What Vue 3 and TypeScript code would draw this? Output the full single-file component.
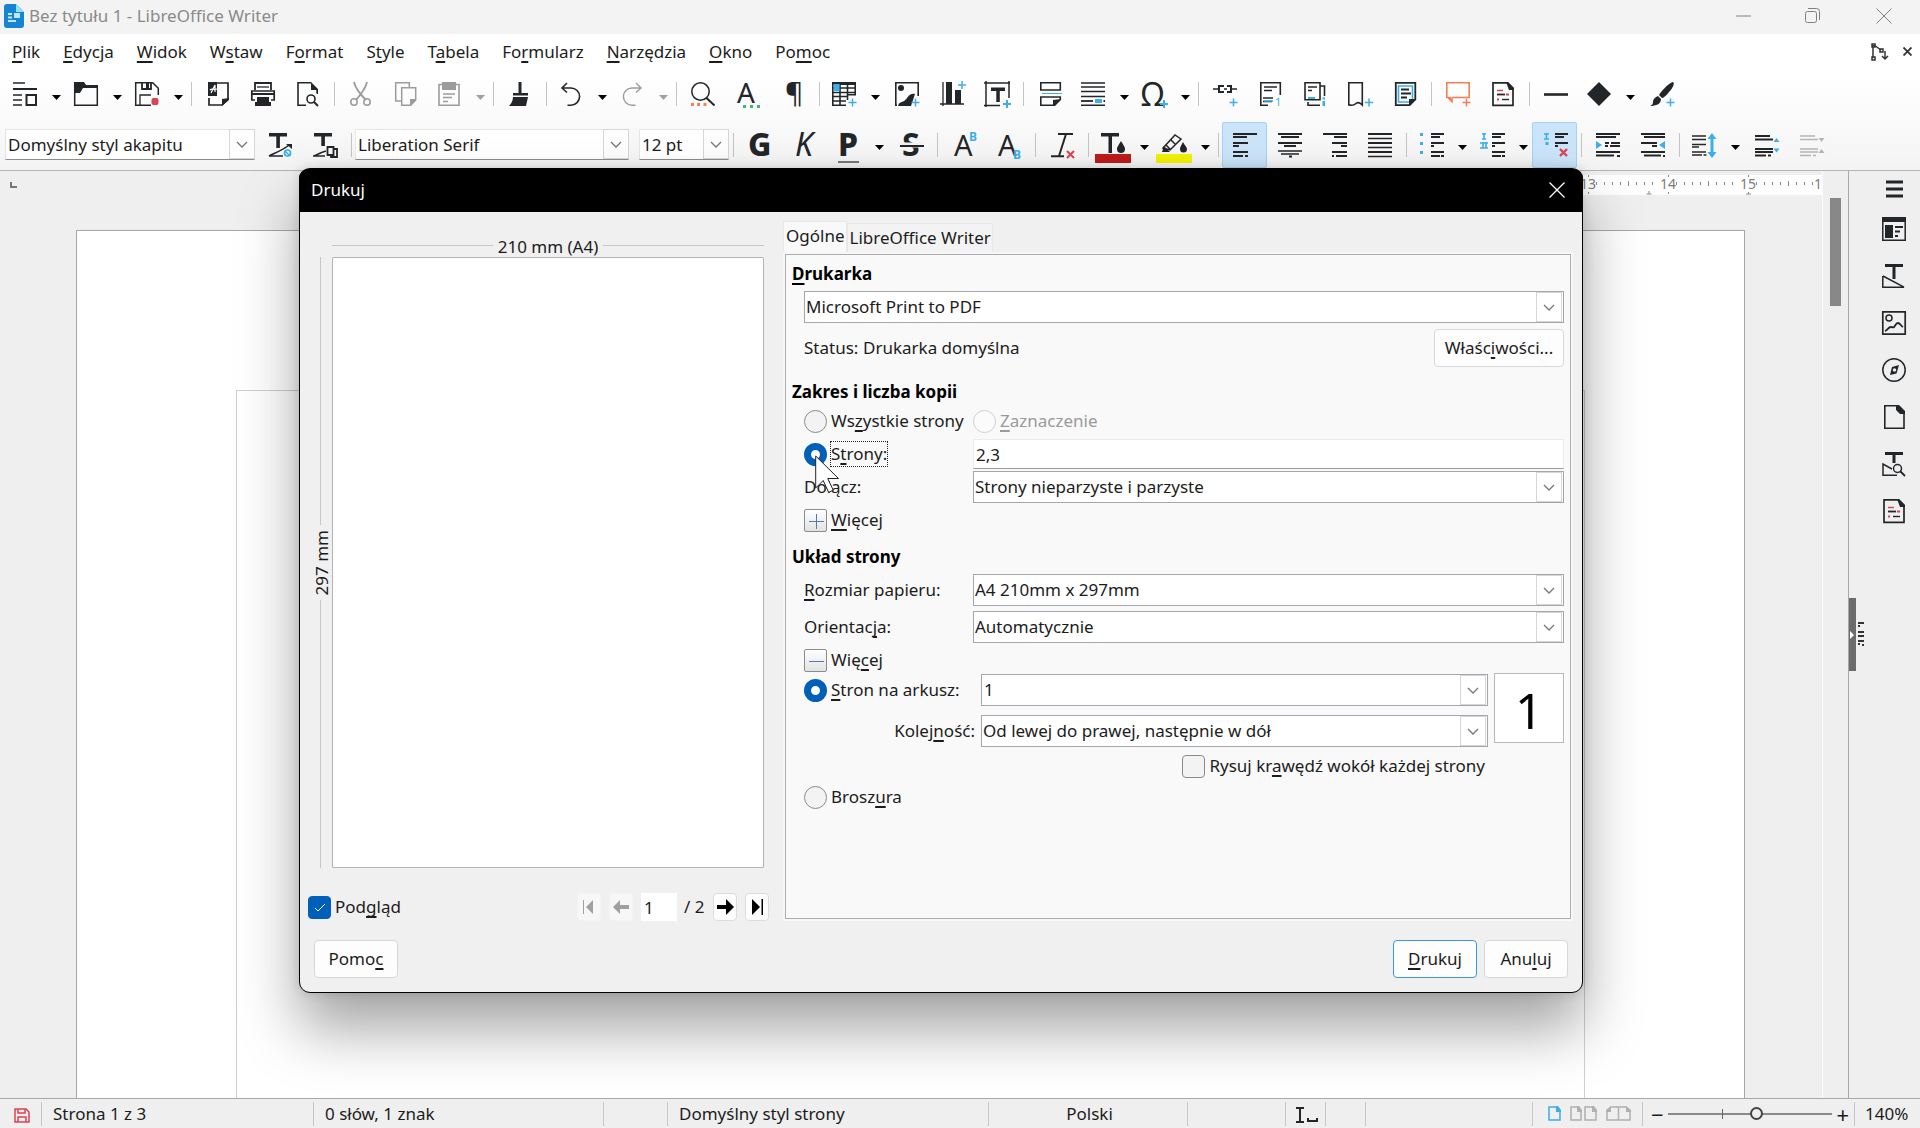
<script setup lang="ts">
import { h, ref } from 'vue'

interface Tool { icon?: string; label?: string; drop?: boolean; on?: boolean; off?: boolean; sep?: boolean }

const D = '#232629'
const B = '#3daee9'
const R = '#da4453'
const O = '#f67e52'
const G = '#9c9c9c'

const line = (d: string, c = D, w = 2) => `<path d="${d}" fill="none" stroke="${c}" stroke-width="${w}"/>`
const fill = (d: string, c = D) => `<path d="${d}" fill="${c}"/>`
const plus = (x: number, y: number, c = B) => line(`M${x - 4} ${y}h8M${x} ${y - 4}v8`, c, 1.5)
const txt = (s: string, x: number, y: number, size: number, extra = '', c = D) =>
  `<text x="${x}" y="${y}" font-size="${size}" fill="${c}" ${extra}>${s}</text>`

const icons: Record<string, string> = {
  styles: line('M0 1h12M0 13h9M0 18h9M0 23h9', D, 1.6) + line('M0 7h24M13.500 13h9.500v10h-9.500z'),
  open: fill('M0 0h10l2 3h12v3H9L6 11H0z') + line('M.7 1v22.300h22.600V5', D, 1.5),
  save: line('M16 23.300H.7V.7h17l5.600 5.600V13', D, 1.5) + line('M5 23V13h11', D, 1.3) + line('M7 0v7h9V0', D, 1.8) + fill('M11 1h3v5h-3z') + `<rect x="16.500" y="16" width="7" height="7" rx="2" fill="${R}"/>`,
  pdf: fill('M2 0h9v14H2z') + line('M5 11l4-8v7M4 8c2-2 4 0 7-1', '#fff', 1.2) + line('M11 1h11v16l-6 6H3v-7', D, 1.7) + fill('M23 16v2l-7 6v-7z'),
  print: line('M4 8V1h16v7', D, 1.8) + line('M6 5h12', D, 1.3) + line('M4 18H.8V9h22.400v9H20', D, 1.7) + fill('M1 11h22v2H1zM6 15h12v5h2v4H4v-4h2z'),
  preview: line('M10 23.200H2V.8h13', D, 1.6) + fill('M15 0l7 7v4h-1.500V8H15z') + line('M21.300 8v4', D, 1.5) + `<circle cx="15" cy="17" r="4" fill="none" stroke="${D}" stroke-width="1.600"/>` + line('M18 20l4 4', D, 2),
  cut: line('M5 0c1 5 4 10 12 18M18 0c-1 5-4 10-11 18', G, 1.8) + `<circle cx="5" cy="20" r="3.200" fill="none" stroke="${G}" stroke-width="1.500"/><circle cx="18" cy="20" r="3.200" fill="none" stroke="${G}" stroke-width="1.500"/>`,
  copy: line('M7 19H1.700V.8h13.600V5', G, 1.5) + line('M7.700 5.700h14V18l-5 5.300h-9z', G, 1.5) + fill('M22 17v1l-6 6v-7z', G),
  paste: line('M2 2.500h20v20.700H2z', G, 1.6) + fill('M5 0h14v8H5z', G) + line('M6 12h12M6 15.500h9M6 19.500h5', G, 1.5),
  brush: fill('M10.500 0h3v11h-3zM5 11h15v2.500H5zM5 15h15l-2 9H1c2-2 4-5 4-9z'),
  undo: line('M8 1L3 6l5 4.500M3 6h9a8.500 8.500 0 0 1 0 17.200H8.500', D, 1.6),
  redo: line('M16 1l5 5-5 4.500M21 6h-9a8.500 8.500 0 0 0 0 17.200h3.500', G, 1.4),
  find: `<circle cx="9.500" cy="9.500" r="8.700" fill="none" stroke="${D}" stroke-width="1.500"/>` + line('M15.500 16l8 7.500') + fill('M0 21h3v3H0zM6 21h3v3H6zM12.500 21h3v3h-3z', O),
  spell: txt('A', 1, 21, 28) + fill('M7 23h3v3H7zM14 23h3v3h-3zM21 23h3v3h-3z', '#3fb86f'),
  pilcrow: txt('¶', 4, 21, 28),
  table: line('M.8 .8h22.400v12H16M.8 .8v22.400H14M1 6h22M1 10.500h22M1 14.500h14M1 19h13M8 1v22M15.500 3v15', D, 1.6) + fill('M0 0h24v3H0z') + fill('M1.500 2h6v7h-6z', B) + plus(20.500, 20.500),
  image: line('M2 23.200H.8V.8h22.400V14', D, 1.6) + `<circle cx="6" cy="6" r="3" fill="${D}"/>` + fill('M3 24c1-5 6-3 9-8 2-4 6-5 8-4l-4 12z') + plus(20.500, 20.500),
  chart: line('M0 22h24M3 0v24', D, 1.3) + fill('M6 0h6v22H6zM15 8h6v14h-6z') + plus(22, 3),
  textbox: line('M-1 1h26M1 -1v26M24 -1v17M-1 23.500h16', D, 1.5) + fill('M6 5.500h14v3.500H6zM11.300 6h3.500v14h-3.500z') + line('M18 22h8M22 18v8', B, 2),
  pagebreak: line('M2.800 .800h19.500V8H2.800z', D, 1.6) + line('M4 11.500h20', B, 1) + line('M16 23.200H2.800V15h19.500v3', D, 1.6) + fill('M23 17v1l-6 6h-2v-6z'),
  field: line('M0 1h24M0 5h24M0 9.500h24M0 14.500h24M0 23.300h24', D, 1.5) + line('M0 19h12', D, 1.8) + fill('M14 17h7v4h-7z', B) + line('M22.500 19H24', D, 2),
  omega: txt('Ω', -1, 24, 32) + line('M18 22h8M22 18v8', B, 2),
  link: line('M0 7h6M18 7h6M11 7h3', D, 1.6) + line('M11 4H6v6h5M14 4h4v6h-4', D, 2) + plus(20.500, 20.500),
  footnote: line('M10 23.200H2.800V.8h19.500V13', D, 1.6) + line('M6 5h13M6 8.500h8', D, 1.5) + line('M5 16h10M5 19.500h9', D, 1.4) + line('M6 19h9', B, 1.5) + txt('1', 17, 24, 11, '', B),
  endnote: line('M2 .8h15v17H2zM17 4h4.500v10M5 20v3.300h12', D, 1.6) + line('M5 5h9M5 8.500h4', D, 1.4) + line('M5 16h7', B, 2) + fill('M19.500 15.500h2.500v2h-2.500zM19.500 19h2.500v5h-2.500z', B),
  bookmark: line('M.8 23V.8h13.500V23c-3-3-5-3-7-1s-4 1-6.500 1z', D, 1.6) + plus(21, 20.500),
  crossref: line('M16 23.200H2.800V.8h19.500V18', D, 1.8) + line('M16 20H5.500V4h14v13', B, 1.6) + line('M8 7.500h8M8 11.500h10M8 15.500h6', D, 1.8) + fill('M23 17v1l-6 6h-1v-7z'),
  comment: line('M6 15.500v4l-4-4H.800V.800h22.400v14.700H6', O, 1.6) + fill('M1 15h4v5z', O) + plus(20.500, 20.500, O),
  track: line('M2 .8h14.500l5.500 5.500v17H2z', D, 1.7) + fill('M15 0h2l6 6v2h-5z') + line('M6 8.500h6', R, 1.5) + line('M6 12.500h8', D, 1.8) + line('M15 12.500h3M6 17.500h2', R, 1.8) + line('M11 17.500h7', D, 1.4),
  line: line('M0 12.500h24', D, 2.6),
  diamond: fill('M12 0l12 12-12 12L0 12z'),
  draw: fill('M23 0c2 1 0 6-4 10-3 4-6 6-7 6l-3-3C10 11 18 1 23 0zM8 14l3 3c0 5-5 7-11 7 3-1 3-3 3-5 1-3 3-4 5-5z') + plus(20.500, 20.500),
  updatestyle: fill('M1 0h18v3.500H1zM8.300 0h3.600v15H8.300z') + line('M1 23h14M1 23c6-3 14-6 20-11', D, 1.6) + fill('M18 11h6v5z') + `<circle cx="19.500" cy="20" r="3" fill="none" stroke="${B}" stroke-width="1.700"/>` + line('M17 18l5 5', B, 1.4),
  newstyle: fill('M1 0h18v3.500H1zM8.300 0h3.600v13H8.300z') + line('M0 23h12M1 23c4-2 8-4 12-5', D, 1.6) + line('M14.500 14h6v8h-6zM18 22v2h6v-8h-3', D, 1.8),
  bold: txt('G', 0, 23, 32, 'font-weight="800"'),
  italic: txt('K', 2, 23, 32, 'font-style="italic"'),
  under: txt('P', 2, 23, 32, 'font-weight="800"') + line('M2 29h21', D, 1.2),
  strike: txt('S', 3, 23, 32, 'font-weight="700"') + line('M0 12h24', '#f2f2f2', 5) + line('M1 13h24', D, 2),
  sup: txt('A', 2, 23, 29) + txt('B', 17, 8, 12, 'font-weight="700"', B),
  sub: txt('A', 1, 23, 29) + txt('B', 16, 26, 12, 'font-weight="700"', B),
  clear: line('M8 1h15M1 23.300h13M16 1L9 23', D, 2) + line('M17 18l7 7M24 18l-7 7', R, 2),
  fontcolor: fill('M0 0h18v3.500H0zM7.500 0h3.500v20H7.500z') + fill('M20 8c3 5 4 6 4 8a4 4 0 0 1-8 0c0-2 1-3 4-8z') + fill('M-6 21h36v9H-6z', '#bf1a1a'),
  highlight: line('M1 15L13 2l6 4L8 17zM4 12l5 5M9 7l5 5', D, 1.5) + fill('M0 19l2-6 6 6zM21 9c2 4 4 5 4 7a3.500 3.500 0 0 1-7 0c0-2 1-3 3-7z') + fill('M-6 21h36v9H-6z', '#f2f200'),
  left: line('M0 1h24M0 4h14M0 10h15M0 13h6M0 19h15M0 23h10M12 23h3', D, 2),
  center: line('M0 1h24M3 4h18M0 10h24M6 13h12M11 23.500h3', D, 2) + line('M0 18h24M3 21h18', D, 1.5),
  right: line('M0 1h24M11 4h13M9 10h15M18 13h6M9 19h15M13 23h11M9 23h2', D, 2),
  justify: line('M0 1h24M0 10h24M0 19h24', D, 2) + line('M0 5.500h24M0 14.500h24M0 23.500h24', D, 1.4),
  bullets: fill('M1 0h3v3H1zM1 9h3v3H1zM1 18h3v3H1z', B) + line('M12 1h13M12 4h9M12 10h13M12 13h3M12 19h13M12 23h9M22 23h3', D, 2),
  numbers: line('M2 1h4M4 0v6M2 6h4M0 10h8M3 9v6M6 9v6M0 15h8', B, 1.6) + line('M12 1h13M12 4h9M12 10h13M12 13h3M12 19h13M12 23h9M22 23h3', D, 2),
  nolist: line('M1 1h5M3.500 0v6M1 6h5', B, 1.6) + fill('M2.500 9h3v3h-3z', B) + line('M12 1h13M12 4h9M12 10h13M12 13h3', D, 2) + line('M17 16l7 7M24 16l-7 7', R, 2.4),
  indent: line('M0 1h24M0 4h20M9 10h4M15 10h9M9 13h3M14 13h10M0 19h24M0 22.500h18M21 23h3', D, 2) + fill('M0 8l6 4-6 4z', B),
  outdent: line('M0 1h24M3 4h21M0 10h16M11 13h5M0 19h24M3 22.500h17M22 23h2', D, 2) + fill('M24 8l-6 4 6 4z', B),
  spacing: line('M0 3h14M0 6.500h14M0 11.500h14M0 14h7M0 19h14M0 22h10M11.500 22h3', D, 1.7) + line('M20 3v19', B, 3) + fill('M15.500 6L20 0l4.500 6zM15.500 19L20 25l4.500-6z', B),
  paraup: line('M0 3h15M0 6.500h18M0 16h18M0 19h18M0 22.500h11M13 22.500h3', D, 2) + fill('M18.500 9l3-4 3 4zM18.500 15.500l3 4 3-4z', B),
  paradown: line('M0 3h15M0 6.500h18M0 16h18M0 19h18M0 22.500h11M13 22.500h3', '#b4b4b4', 1.7) + fill('M18.500 5l3 4 3-4zM18.500 20l3-4 3 4z', '#b4b4b4'),
  menu: line('M4 5h17M4 12h17M4 19h17', D, 3),
  props: line('M.8 .8h22.400v22.400H.8z', D, 1.5) + fill('M0 0h24v5H0zM3 8h8v13H3z') + line('M13 10h8M13 14.500h5M13 19h3', D, 1.8),
  sstyles: fill('M3 0h18v3H3zM10.500 0h3v15h-3z') + line('M.8 12v11.200H22L1 12', D, 1.5),
  gallery: line('M.8 .8h22.400v22.400H.8z', D, 1.7) + `<circle cx="7" cy="7" r="3" fill="none" stroke="${D}" stroke-width="1.500"/>` + line('M3 20c3-1 3-4 6-4 1 0 2 1 3 0s2-4 4-4 3 3 5 4', D, 1.8),
  nav: `<circle cx="12" cy="12" r="11.200" fill="none" stroke="${D}" stroke-width="1.500"/>` + fill('M17 7l-2.500 8.500L8 17l2-8z') + `<circle cx="12.500" cy="12" r="1.700" fill="#efefef"/>`,
  page: line('M2.800 .8H16l6 6v16.500H2.800z', D, 1.6) + fill('M14 0h3l6 6v3h-5l-4-4z'),
  inspect: fill('M3 0h18v3H3zM10.500 0h3v11h-3z') + line('M10 17L1 12v11.200h14', D, 1.5) + `<circle cx="15.500" cy="16.500" r="4" fill="none" stroke="${D}" stroke-width="1.500"/>` + line('M18 19l5 5', D, 1.8),
}

const t = (icon: string, label: string, o: Partial<Tool> = {}): Tool => ({ icon, label, ...o })
const sep: Tool = { sep: true }
const dr = { drop: true }

const standard: Tool[] = [
  t('styles', 'Nowy', dr), t('open', 'Otwórz', dr), t('save', 'Zapisz', dr), sep,
  t('pdf', 'Eksportuj jako PDF'), t('print', 'Drukuj'), t('preview', 'Podgląd wydruku'), sep,
  t('cut', 'Wytnij', { off: true }), t('copy', 'Kopiuj', { off: true }), t('paste', 'Wklej', { off: true, drop: true }), sep,
  t('brush', 'Klonuj formatowanie'), sep,
  t('undo', 'Cofnij', dr), t('redo', 'Ponów', { off: true, drop: true }), sep,
  t('find', 'Znajdź'), t('spell', 'Pisownia'), t('pilcrow', 'Znaczniki formatowania'), sep,
  t('table', 'Wstaw tabelę', dr), t('image', 'Wstaw obraz'), t('chart', 'Wstaw wykres'), t('textbox', 'Wstaw pole tekstowe'), sep,
  t('pagebreak', 'Podział strony'), t('field', 'Wstaw pole', dr), t('omega', 'Znak specjalny', dr), sep,
  t('link', 'Hiperłącze'), t('footnote', 'Przypis dolny'), t('endnote', 'Przypis końcowy'), t('bookmark', 'Zakładka'), t('crossref', 'Odsyłacz'), sep,
  t('comment', 'Komentarz'), t('track', 'Śledzenie zmian'), sep,
  t('line', 'Linia'), t('diamond', 'Kształty', dr), t('draw', 'Funkcje rysunkowe'),
]
const styleTools: Tool[] = [t('updatestyle', 'Aktualizuj styl'), t('newstyle', 'Nowy styl'), sep]
const formatting: Tool[] = [
  sep, t('bold', 'Pogrubienie'), t('italic', 'Kursywa'), t('under', 'Podkreślenie', dr), t('strike', 'Przekreślenie'), sep,
  t('sup', 'Indeks górny'), t('sub', 'Indeks dolny'), sep, t('clear', 'Wyczyść formatowanie'), sep,
  t('fontcolor', 'Kolor czcionki', dr), t('highlight', 'Kolor wyróżnienia', dr), sep,
  t('left', 'Do lewej', { on: true }), t('center', 'Do środka'), t('right', 'Do prawej'), t('justify', 'Wyjustuj'), sep,
  t('bullets', 'Lista nienumerowana', dr), t('numbers', 'Lista numerowana', dr), t('nolist', 'Bez listy', { on: true }), sep,
  t('indent', 'Zwiększ wcięcie'), t('outdent', 'Zmniejsz wcięcie'), sep,
  t('spacing', 'Interlinia', dr), t('paraup', 'Zwiększ odstęp'), t('paradown', 'Zmniejsz odstęp', { off: true }),
]
const sidebar = [t('props', 'Właściwości'), t('sstyles', 'Style'), t('gallery', 'Galeria'), t('nav', 'Nawigator'), t('page', 'Strona'), t('inspect', 'Inspektor stylów'), t('track', 'Zmiany')]

// An underscore marks the access key of the letter after it.
const menus = ['_Plik', '_Edycja', '_Widok', 'W_staw', 'F_ormat', 'S_tyle', 'T_abela', 'Fo_rmularz', '_Narzędzia', '_Okno', 'Po_moc']
const Key = (p: { text: string }) => {
  const i = p.text.indexOf('_')
  return h('span', { class: 'key' }, [p.text.slice(0, i), h('u', p.text[i + 1]), p.text.slice(i + 2)])
}
Key.props = ['text']

const Icon = (p: { name: string }) => h('svg', { class: 'ico', viewBox: '0 0 24 24', width: 24, height: 24, 'aria-hidden': 'true', innerHTML: icons[p.name] })
Icon.props = ['name']
const Chevron = () => h('span', { class: 'chev' }, [h('svg', { viewBox: '0 0 12 7', width: 12, height: 7, innerHTML: '<path d="M1 1l5 5 5-5" fill="none" stroke="#777" stroke-width="1.300"/>' })])

const range = ref('pages')
const layout = ref('sheet')
const preview = ref(true)
const border = ref(false)
const pages = ref('2,3')
const current = ref('1')
const zoom = ref(54)
const cms = ['13', '14', '15']
</script>

<template>
  <div class="app">
    <header class="title">
      <svg width="20" height="24" viewBox="0 0 20 24" aria-hidden="true">
        <path d="M3 0h9l8 8v13a3 3 0 0 1-3 3H3a3 3 0 0 1-3-3V3a3 3 0 0 1 3-3z" fill="#1684d2" />
        <path d="M12 0l8 8h-8z" fill="#8fe0fa" />
        <path d="M4 9h4v2H4zM4 12.500h4v2H4zM4 16h8v2H4zM10 9h6v5h-6z" fill="#bfe6fb" />
      </svg>
      <span>Bez tytułu 1 - LibreOffice Writer</span>
      <div class="winbtns">
        <button aria-label="Minimalizuj"><svg width="16" height="16"><path d="M0 8h15" /></svg></button>
        <button aria-label="Przywróć"><svg width="16" height="16"><path d="M3 .5h8.500a3 3 0 0 1 3 3V12" /><rect x=".5" y="3.500" width="11" height="11" rx="2" /></svg></button>
        <button aria-label="Zamknij"><svg width="16" height="16"><path d="M.5 .5l15 15M15.500 .5l-15 15" /></svg></button>
      </div>
    </header>

    <div class="chrome">
      <nav class="menubar">
        <button v-for="m in menus" :key="m"><Key :text="m" /></button>
        <span class="grow" />
        <svg width="20" height="20" viewBox="0 0 20 20" fill="none" stroke="#333" stroke-width="1.500" aria-hidden="true">
          <path d="M3 3v13M4 3l7 5M15 9v8M12 14l3 3 3-3" /><path d="M2 2h3v3H2zM2 15h3v3H2zM10 7h3v3h-3z" />
        </svg>
        <button class="closedoc" aria-label="Zamknij dokument"><svg width="9" height="9"><path d="M.5 .5l8 8M8.500 .5l-8 8" stroke="#333" stroke-width="1.800" /></svg></button>
      </nav>
      <div class="bar" role="toolbar">
        <template v-for="(it, i) in standard" :key="i">
          <i v-if="it.sep" class="sep" />
          <button v-else class="tool" :class="{ split: it.drop }" :aria-label="it.label" :disabled="it.off"><Icon :name="it.icon!" /></button>
          <button v-if="it.drop" class="more" :class="{ off: it.off }" :aria-label="it.label + ' – więcej'"><svg width="9" height="5"><path d="M0 0h9L4.500 5z" /></svg></button>
        </template>
      </div>
      <div class="bar second" role="toolbar">
        <div class="combo flat c1"><select aria-label="Styl akapitu"><option>Domyślny styl akapitu</option></select><Chevron /></div>
        <template v-for="(it, i) in styleTools" :key="i">
          <i v-if="it.sep" class="sep" />
          <button v-else class="tool" :aria-label="it.label"><Icon :name="it.icon!" /></button>
        </template>
        <div class="combo flat c2"><select aria-label="Nazwa czcionki"><option>Liberation Serif</option></select><Chevron /></div>
        <div class="combo flat c3"><select aria-label="Rozmiar czcionki"><option>12 pt</option></select><Chevron /></div>
        <template v-for="(it, i) in formatting" :key="i">
          <i v-if="it.sep" class="sep" />
          <button v-else class="tool" :class="{ split: it.drop, on: it.on }" :aria-label="it.label" :disabled="it.off"><Icon :name="it.icon!" /></button>
          <button v-if="it.drop" class="more" :aria-label="it.label + ' – więcej'"><svg width="9" height="5"><path d="M0 0h9L4.500 5z" /></svg></button>
        </template>
      </div>
    </div>

    <main class="work">
      <div class="canvas">
        <div class="rulerrow">
          <i class="tabkind" />
          <div class="ruler">
            <div v-for="n in cms" :key="n" class="cm">
              <svg width="80" height="20" fill="none" stroke="#8a8a8a" aria-hidden="true">
                <path d="M.5 6v5M8.500 7v3M16.500 7v3M24.500 7v3M48.500 7v3M56.500 7v3M64.500 7v3M72.500 7v3M40.500 0v2M40.500 17v2" />
                <path v-if="n === '14'" d="M18.500 19h5M21 16v3" />
                <path v-if="n === '15'" d="M38 19h5" />
              </svg>
              <span>{{ n }}</span>
            </div>
            <div class="cm last">
              <svg width="34" height="20" fill="none" stroke="#8a8a8a" aria-hidden="true"><path d="M.5 6v5M8.500 7v3M16.500 7v3M24.500 7v3" /></svg>
              <span>1</span>
            </div>
          </div>
        </div>
        <div class="sheet"><div class="margins" /></div>
      </div>
      <div class="scroll"><i /></div>
      <aside class="side">
        <div class="grip">
          <button aria-label="Ukryj panel"><svg width="6" height="8"><path d="M1 0l4 4-4 4z" fill="#fff" /></svg></button>
          <svg width="6" height="24" stroke="#333" stroke-width="2" aria-hidden="true"><path d="M0 1h6M0 4h2M0 10h6M0 14h6M0 19h6M0 22h2M4 23h2" /></svg>
        </div>
        <div class="deck">
          <button class="ham" aria-label="Ustawienia panelu"><Icon name="menu" /></button>
          <button v-for="s in sidebar" :key="s.label" :aria-label="s.label"><Icon :name="s.icon!" /></button>
        </div>
      </aside>
    </main>

    <footer class="status">
      <div class="s0"><svg width="16" height="15" fill="none" stroke="#da4453" stroke-width="1.500" aria-hidden="true"><path d="M1 1h11l3 3v10H1zM4 1v4h7V1M4 14V9h8v5" /></svg></div>
      <div class="s1">Strona 1 z 3</div>
      <div class="s2">0 słów, 1 znak</div>
      <div class="s3" />
      <div class="s4">Domyślny styl strony</div>
      <div class="s5">Polski</div>
      <div class="s6" />
      <div class="s7"><svg width="22" height="16" fill="none" stroke="#232629" stroke-width="2" aria-hidden="true"><path d="M0 1h8M0 15h8M4 1v14M12 11v3h9v-3" /></svg></div>
      <div class="s8" />
      <div class="s9" />
      <div class="views">
        <svg width="13" height="15" fill="none" stroke="#3daee9" stroke-width="1.500"><path d="M1 1h8l3 4v9H1z" /><path d="M8 0h2l3 4v2H8z" fill="#3daee9" stroke="none" /></svg>
        <svg width="27" height="15" fill="none" stroke="#b0b0b0" stroke-width="1.500"><path d="M1 1h7l3 4v9H1zM15 1h8l3 4v9H15z" /><path d="M7 0h2l3 4v2H7zM22 0h2l3 4v2h-5z" fill="#b0b0b0" stroke="none" /></svg>
        <svg width="25" height="15" fill="none" stroke="#b0b0b0" stroke-width="1.500"><path d="M12.500 1H5L1 5v9h11.500zM12.500 1H20l4 4v9H12.500z" /><path d="M5 0v6H0V4zM20 0v6h5V4z" fill="#b0b0b0" stroke="none" /></svg>
      </div>
      <div class="zoomer"><button aria-label="Pomniejsz">−</button><input v-model="zoom" type="range" min="0" max="100" aria-label="Powiększenie"><button aria-label="Powiększ">+</button></div>
      <div class="pct">140%</div>
    </footer>

    <section class="dialog" role="dialog" aria-label="Drukuj">
      <header class="dtitle"><span>Drukuj</span><button aria-label="Zamknij"><svg width="16" height="16"><path d="M.5 .5l15 15M15.500 .5l-15 15" fill="none" stroke="#fff" stroke-width="1.300" /></svg></button></header>
      <div class="panes">
        <div class="leftpane">
          <div class="dimh"><i /><span>210 mm (A4)</span><i /></div>
          <div class="paperrow">
            <div class="dimv"><i /><span>297 mm</span><i /></div>
            <div class="paper" />
          </div>
          <div class="pager">
            <label class="opt"><input v-model="preview" type="checkbox"><svg v-if="preview" class="tick" width="12" height="9"><path d="M1 5l3 3 7-7" /></svg><Key text="Pod_gląd" /></label>
            <span class="grow" />
            <button disabled aria-label="Pierwsza strona"><svg width="12" height="14"><path d="M0 0h1v14H0zM10 0v14L3 7z" /></svg></button>
            <button disabled aria-label="Poprzednia strona"><svg width="16" height="14"><path d="M0 7l7-7v5h9v4H7v5z" /></svg></button>
            <input v-model="current" class="num" aria-label="Strona podglądu">
            <span class="of">/ 2</span>
            <button aria-label="Następna strona"><svg width="17" height="16"><path d="M17 8L9 0v6H0v4h9v6z" /></svg></button>
            <button aria-label="Ostatnia strona"><svg width="12" height="16"><path d="M10.500 0H12v16h-1.500zM1 0v16l8-8z" /></svg></button>
          </div>
        </div>

        <div class="rightpane">
          <div class="tabs" role="tablist">
            <button class="active" role="tab" aria-selected="true">Ogólne</button>
            <button role="tab" aria-selected="false">LibreOffice Writer</button>
          </div>
          <div class="frame">
            <h2><Key text="_Drukarka" /></h2>
            <div class="row r5"><div class="combo"><select aria-label="Drukarka"><option>Microsoft Print to PDF</option></select><Chevron /></div></div>
            <div class="row tall"><span class="st">Status:</span><span>Drukarka domyślna</span><span class="grow" /><button class="push wide"><Key text="Właśc_iwości..." /></button></div>

            <h2 class="h13">Zakres i liczba kopii</h2>
            <div class="row radios">
              <label class="opt lab"><input v-model="range" type="radio" name="range" value="all"><Key text="Ws_zystkie strony" /></label>
              <label class="opt dim"><input type="radio" name="range" value="sel" disabled><Key text="_Zaznaczenie" /></label>
            </div>
            <div class="row r5">
              <label class="opt lab focus"><input v-model="range" type="radio" name="range" value="pages"><Key text="S_trony:" />
                <svg class="cursor" width="25" height="39" viewBox="0 0 25 39"><path d="M.700 1v32l7.500-7.500 5.500 12 4.500-2.500-5.500-11.500H23.500z" fill="#fff" stroke="#222" stroke-width="1" /></svg>
              </label>
              <input v-model="pages" class="text" aria-label="Numery stron">
            </div>
            <div class="row r2"><label class="lab" for="incl">Dołącz:</label><div class="combo"><select id="incl"><option>Strony nieparzyste i parzyste</option></select><Chevron /></div></div>
            <div class="row r5"><button class="expander"><svg width="23" height="23"><path d="M11.500 4v15M4 11.500h15" /></svg><Key text="_Więcej" /></button></div>

            <h2 class="h13">Układ strony</h2>
            <div class="row r5"><label class="lab" for="size"><Key text="_Rozmiar papieru:" /></label><div class="combo"><select id="size"><option>A4 210mm x 297mm</option></select><Chevron /></div></div>
            <div class="row r5"><label class="lab" for="orient"><Key text="Orientac_ja:" /></label><div class="combo"><select id="orient"><option>Automatycznie</option></select><Chevron /></div></div>
            <div class="row r5"><button class="expander"><svg width="23" height="23"><path d="M4 11.500h15" /></svg><Key text="Wię_cej" /></button></div>
            <div class="nup">
              <div class="nupcol">
                <div class="row r2"><label class="opt lab2"><input v-model="layout" type="radio" name="layout" value="sheet"><Key text="_Stron na arkusz:" /></label><div class="combo one"><select aria-label="Stron na arkusz"><option>1</option></select><Chevron /></div></div>
                <div class="row r9"><label class="lab2 end" for="order"><Key text="Kolej_ność:" /></label><div class="combo"><select id="order"><option>Od lewej do prawej, następnie w dół</option></select><Chevron /></div></div>
                <div class="row r7 right"><label class="opt"><input v-model="border" type="checkbox"><Key text="Rysuj kr_awędź wokół każdej strony" /></label></div>
              </div>
              <div class="thumb">1</div>
            </div>
            <div class="row r7"><label class="opt"><input v-model="layout" type="radio" name="layout" value="brochure"><Key text="Brosz_ura" /></label></div>
          </div>
        </div>
      </div>
      <footer class="dfoot">
        <button class="push"><Key text="Pomo_c" /></button>
        <span class="grow" />
        <button class="push primary"><Key text="_Drukuj" /></button>
        <button class="push"><Key text="Anu_luj" /></button>
      </footer>
    </section>
  </div>
</template>

<style>
body { margin: 0; }
.key u { text-decoration: underline; text-decoration-thickness: 2px; text-underline-offset: 3px; text-decoration-skip-ink: none; }
.ico { display: block; overflow: visible; flex: none; font-family: "Noto Sans", sans-serif; }
.chev { position: absolute; right: 2px; top: 1px; bottom: 1px; width: 26px; display: flex; align-items: center; justify-content: center; border: 1px solid #d6d6d6; box-sizing: border-box; background: #fff; pointer-events: none; }
</style>

<style scoped>
.app { position: relative; display: flex; flex-direction: column; min-height: 100vh; overflow: hidden; background: #efefef; color: #1c1c1c; font: 17px/24px "Noto Sans", "Open Sans", sans-serif; }
.app * { box-sizing: border-box; }
button, select, input { font: inherit; color: inherit; margin: 0; padding: 0; border: 0; background: none; }
.grow { flex: 1; }

.title { display: flex; align-items: center; height: 34px; padding: 0 0 2px 4px; background: #f3f3f3; color: #8a8a8a; }
.title span { margin-left: 5px; }
.winbtns { display: flex; margin-left: auto; }
.winbtns button { width: 69px; height: 28px; display: flex; align-items: center; justify-content: center; }
.winbtns button:last-child { width: 73px; }
.winbtns path, .winbtns rect { fill: none; stroke: #808080; stroke-width: 1; }

.chrome { background: linear-gradient(#fff, #fff 30%, #f4f4f4); border-bottom: 1px solid #b4b4b4; }
.menubar { display: flex; align-items: center; height: 37px; padding: 0 8px 2px 12px; }
.menubar button { margin-right: 23px; white-space: nowrap; }
.menubar .closedoc { margin: 0 0 0 13px; display: flex; }
.bar { display: flex; align-items: center; height: 46px; padding-left: 4px; }
.second { height: 53px; padding: 2px 0 0 5px; }
.sep { width: 8px; height: 24px; flex: none; background: linear-gradient(90deg, transparent 4px, #c4c4c4 4px, #c4c4c4 5px, transparent 5px); }
.tool { width: 45px; height: 46px; flex: none; display: flex; align-items: center; justify-content: center; }
.tool.split { width: 41px; }
.tool.on { background: #cbe4f9; border: 1px solid #a3d2f7; border-radius: 2px; }
.more { width: 20px; height: 46px; flex: none; padding: 6px 0 0 7px; display: flex; align-items: center; }
.more.off { fill: #a0a0a0; }

.combo { position: relative; flex: 1; height: 32px; }
.combo select { appearance: none; width: 100%; height: 100%; padding: 0 30px 0 1px; border: 1px solid #a3a6ad; background: #fff; }
.combo.one select { padding-left: 2px; }
.flat { flex: none; height: 31px; }
.flat select { border-color: #e6e6e6; border-bottom-color: #8c8c8c; padding-left: 2px; }
.flat :deep(.chev) { right: 0; top: 0; bottom: 1px; background: #fdfdfd; }
.c1 { width: 250px; margin-right: 2px; }
.c2 { width: 274px; margin-right: 10px; }
.c3 { width: 90px; }

.work { flex: 1; display: flex; }
.canvas { flex: 1; display: flex; flex-direction: column; min-width: 0; border-right: 1px solid #fafafa; }
.rulerrow { display: flex; height: 24px; padding-top: 4px; }
.tabkind { width: 7px; height: 6px; margin: 7px 282px 0 10px; border: solid #777; border-width: 0 0 2px 2px; }
.ruler { flex: 1; background: #fff; display: flex; justify-content: flex-end; }
.cm { width: 80px; height: 20px; flex: none; display: grid; }
.cm > * { grid-area: 1 / 1; }
.cm span { text-align: center; font-size: 14px; line-height: 18px; color: #7c7c7c; }
.cm.last { width: 34px; }
.cm.last span { text-align: right; }
.sheet { flex: 1; margin: 35px 77px 0 76px; padding: 159px 159px 0; background: #fff; border: 1px solid #a6a6a6; border-bottom: 0; display: flex; }
.margins { flex: 1; border: 1px solid #cfcfcf; border-bottom: 0; }
.scroll { width: 25px; padding: 27px 7px 0; }
.scroll i { display: block; width: 11px; height: 108px; background: #888; }
.side { width: 72px; display: flex; border-left: 1px solid #a8a8a8; }
.grip { width: 21px; display: flex; align-items: flex-start; gap: 2px; padding-top: 427px; }
.grip button { width: 7px; height: 73px; background: #6b6b6b; display: flex; align-items: center; }
.grip > svg { margin-top: 24px; }
.deck { display: flex; flex-direction: column; padding-top: 1px; }
.deck button { width: 47px; height: 47px; display: flex; align-items: center; justify-content: center; }
.deck .ham { height: 33px; }

.status { display: flex; align-items: center; height: 30px; border-top: 1px solid #a8a8a8; background: #efefef; }
.status > div { height: 24px; border-right: 1px solid #c6c6c6; flex: none; white-space: nowrap; }
.status .s0 { width: 42px; padding: 3px 0 0 14px; }
.status .s1 { width: 272px; padding-left: 11px; }
.status .s2 { width: 290px; padding-left: 11px; }
.status .s3 { width: 64px; }
.status .s4 { width: 321px; padding-left: 11px; }
.status .s5 { width: 199px; padding-left: 3px; text-align: center; }
.status .s6 { width: 98px; }
.status .s7 { width: 40px; padding: 3px 0 0 10px; }
.status .s8 { width: 40px; }
.status .s9 { flex: 1; }
.views { width: 110px; display: flex; gap: 9px; align-items: center; padding-left: 15px; }
.zoomer { width: 212px; display: flex; align-items: center; justify-content: space-between; padding: 0 5px 0 8px; font-size: 22px; }
.zoomer input { appearance: none; width: 164px; height: 16px; background: linear-gradient(#666, #666) 54px 50% / 1px 10px no-repeat, linear-gradient(#8a8a8a, #8a8a8a) 0 50% / 100% 2px no-repeat; }
.zoomer input::-webkit-slider-thumb { appearance: none; width: 13px; height: 13px; border: 2px solid #444; border-radius: 50%; background: #efefef; }
.status .pct { width: 65px; padding-left: 10px; border: 0; }

.dialog { position: absolute; left: 299px; right: 337px; top: 168px; background: #f0f0f0; border: 1px solid #000; border-radius: 11px; box-shadow: 0 36px 60px rgba(0, 0, 0, .36), 0 0 12px rgba(0, 0, 0, .14); padding-bottom: 14px; }
.dtitle { display: flex; align-items: center; justify-content: space-between; height: 43px; margin: 0 -1px; padding: 0 18px 1px 12px; background: #000; color: #fff; border-radius: 9px 9px 0 0; }
.dtitle button { display: flex; }
.panes { display: flex; }
.leftpane { width: 483px; flex: none; padding: 21px 14px 0 8px; }
.dimh { display: flex; align-items: center; gap: 5px; height: 24px; margin: 0 5px 0 24px; }
.dimh i { flex: 1; height: 1px; background: #c8c8c8; }
.dimh span { padding-top: 3px; }
.paperrow { display: flex; height: 611px; margin-right: 5px; }
.dimv { width: 24px; display: flex; flex-direction: column; align-items: center; gap: 5px; }
.dimv i { flex: 1; width: 1px; background: #c8c8c8; }
.dimv span { writing-mode: vertical-rl; transform: rotate(180deg); padding-right: 3px; }
.paper { flex: 1; background: #fff; border: 1px solid #b4b4b4; border-radius: 1px; }
.pager { display: flex; align-items: center; height: 28px; margin-top: 25px; }
.pager button { width: 24px; height: 28px; margin-left: 8px; display: flex; align-items: center; justify-content: center; background: #fdfdfd; border: 1px solid #dcdcdc; border-radius: 4px; }
.pager button:disabled { background: #f7f7f7; border-color: #f3f3f3; fill: #a0a0a0; }
.pager .num { width: 36px; height: 28px; margin-left: 8px; padding-left: 3px; background: #fff; }
.of { margin-left: 7px; width: 21px; white-space: nowrap; }
.rightpane { flex: 1; min-width: 0; padding: 9px 11px 0 0; }
.tabs { display: flex; align-items: flex-end; height: 33px; }
.tabs button { height: 29px; padding: 0 1px 0 2px; background: #f3f3f3; border: 1px solid #e8e8e8; border-bottom: 0; white-space: nowrap; margin-bottom: 2px; }
.tabs .active { height: 33px; margin: 0; background: #f9f9f9; padding-bottom: 4px; }
.frame { height: 665px; margin-left: 2px; padding: 7px 6px 0; background: #f9f9f9; border: 1px solid #adadad; outline: 2px solid #f7f7f7; }
h2 { margin: 0; font-size: 17px; line-height: 24px; font-weight: 700; color: #000; }
.h13 { margin-top: 13px; }
.row { display: flex; align-items: center; margin-left: 12px; }
.r2 { margin-top: 2px; }
.r5 { margin-top: 5px; }
.r7 { margin-top: 7px; }
.r9 { margin-top: 9px; }
.tall { height: 38px; margin-top: 6px; }
.radios { height: 26px; margin-top: 4px; }
.right { justify-content: flex-end; padding-right: 3px; }
.st { width: 59px; }
.lab { width: 169px; flex: none; white-space: nowrap; }
.lab2 { width: 177px; flex: none; white-space: nowrap; }
.end { text-align: right; padding-right: 6px; }
.opt { position: relative; display: flex; align-items: center; gap: 4px; white-space: nowrap; }
.opt input { appearance: none; flex: none; width: 23px; height: 23px; border: 1px solid #8a8a8a; background: #f3f3f3; }
.opt input[type="radio"] { border-radius: 50%; }
.opt input[type="radio"]:checked { border: 7px solid #005fb8; background: #fff; }
.opt input[type="checkbox"] { border-radius: 4px; }
.opt input[type="checkbox"]:checked { border-color: #005fb8; background: #005fb8; }
.tick { position: absolute; left: 6px; top: 8px; fill: none; stroke: #fff; }
.dim { color: #9a9a9a; }
.dim input { border-color: #cfcfcf; background: #fbfbfb; }
.focus .key { outline: 1px dotted #222; }
.cursor { position: absolute; left: 11px; top: 13px; z-index: 2; }
.text { flex: 1; height: 30px; padding-left: 2px; background: #fff; border: 1px solid #ececec; border-bottom: 1px solid #9c9c94; }
.expander { display: flex; align-items: center; gap: 4px; height: 24px; }
.expander svg { border: 1px solid #8c8c8c; border-radius: 2px; background: linear-gradient(#fff, #e2e2e2); fill: none; stroke: #5a76b0; stroke-width: 1; }
.nup { display: flex; }
.nupcol { flex: 1; }
.thumb { width: 70px; height: 70px; margin: 1px 0 0 6px; background: #fff; border: 1px solid #b8b8b8; font-size: 49px; line-height: 72px; text-align: center; color: #000; }
.push { width: 84px; height: 38px; background: #fdfdfd; border: 1px solid #d8d8d8; border-radius: 4px; }
.wide { width: 130px; }
.primary { border-color: #3c96dc; }
.dfoot { display: flex; gap: 7px; margin-top: 19px; padding: 0 14px; }
</style>
